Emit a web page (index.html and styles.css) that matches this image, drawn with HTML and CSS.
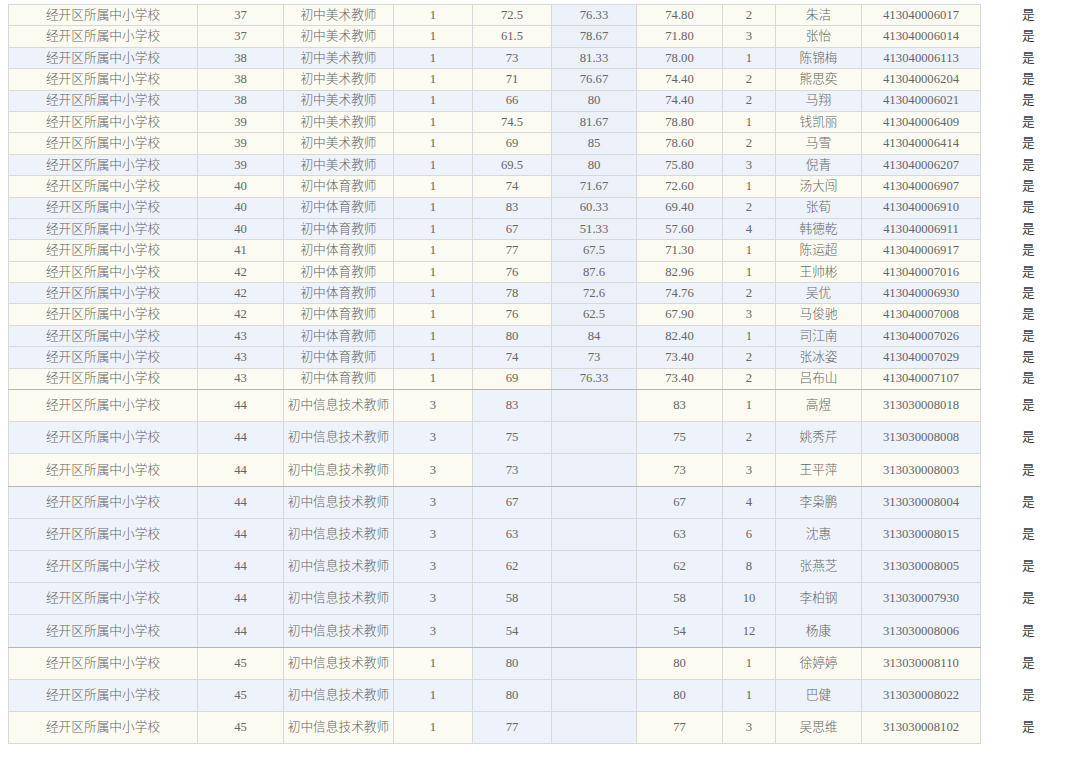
FILE: index.html
```html
<!DOCTYPE html>
<html lang="zh">
<head>
<meta charset="utf-8">
<title>成绩表</title>
<link rel="stylesheet" href="styles.css">
</head>
<body>
<div class="page">
<table class="grid">
<colgroup>
<col class="c1"><col class="c2"><col class="c3"><col class="c4"><col class="c5"><col class="c6"><col class="c7"><col class="c8"><col class="c9"><col class="c10"><col class="c11">
</colgroup>
<tbody>
<tr class="s y"><td>经开区所属中小学校</td><td>37</td><td>初中美术教师</td><td>1</td><td>72.5</td><td>76.33</td><td>74.80</td><td>2</td><td>朱洁</td><td>413040006017</td><td class="ok">是</td></tr>
<tr class="s y"><td>经开区所属中小学校</td><td>37</td><td>初中美术教师</td><td>1</td><td>61.5</td><td>78.67</td><td>71.80</td><td>3</td><td>张怡</td><td>413040006014</td><td class="ok">是</td></tr>
<tr class="s b"><td>经开区所属中小学校</td><td>38</td><td>初中美术教师</td><td>1</td><td>73</td><td>81.33</td><td>78.00</td><td>1</td><td>陈锦梅</td><td>413040006113</td><td class="ok">是</td></tr>
<tr class="s y"><td>经开区所属中小学校</td><td>38</td><td>初中美术教师</td><td>1</td><td>71</td><td>76.67</td><td>74.40</td><td>2</td><td>熊思奕</td><td>413040006204</td><td class="ok">是</td></tr>
<tr class="s b"><td>经开区所属中小学校</td><td>38</td><td>初中美术教师</td><td>1</td><td>66</td><td>80</td><td>74.40</td><td>2</td><td>马翔</td><td>413040006021</td><td class="ok">是</td></tr>
<tr class="s y"><td>经开区所属中小学校</td><td>39</td><td>初中美术教师</td><td>1</td><td>74.5</td><td>81.67</td><td>78.80</td><td>1</td><td>钱凯丽</td><td>413040006409</td><td class="ok">是</td></tr>
<tr class="s y"><td>经开区所属中小学校</td><td>39</td><td>初中美术教师</td><td>1</td><td>69</td><td>85</td><td>78.60</td><td>2</td><td>马雪</td><td>413040006414</td><td class="ok">是</td></tr>
<tr class="s b"><td>经开区所属中小学校</td><td>39</td><td>初中美术教师</td><td>1</td><td>69.5</td><td>80</td><td>75.80</td><td>3</td><td>倪青</td><td>413040006207</td><td class="ok">是</td></tr>
<tr class="s y"><td>经开区所属中小学校</td><td>40</td><td>初中体育教师</td><td>1</td><td>74</td><td>71.67</td><td>72.60</td><td>1</td><td>汤大闯</td><td>413040006907</td><td class="ok">是</td></tr>
<tr class="s b"><td>经开区所属中小学校</td><td>40</td><td>初中体育教师</td><td>1</td><td>83</td><td>60.33</td><td>69.40</td><td>2</td><td>张荀</td><td>413040006910</td><td class="ok">是</td></tr>
<tr class="s b"><td>经开区所属中小学校</td><td>40</td><td>初中体育教师</td><td>1</td><td>67</td><td>51.33</td><td>57.60</td><td>4</td><td>韩德乾</td><td>413040006911</td><td class="ok">是</td></tr>
<tr class="s y"><td>经开区所属中小学校</td><td>41</td><td>初中体育教师</td><td>1</td><td>77</td><td>67.5</td><td>71.30</td><td>1</td><td>陈运超</td><td>413040006917</td><td class="ok">是</td></tr>
<tr class="s y"><td>经开区所属中小学校</td><td>42</td><td>初中体育教师</td><td>1</td><td>76</td><td>87.6</td><td>82.96</td><td>1</td><td>王帅彬</td><td>413040007016</td><td class="ok">是</td></tr>
<tr class="s b"><td>经开区所属中小学校</td><td>42</td><td>初中体育教师</td><td>1</td><td>78</td><td>72.6</td><td>74.76</td><td>2</td><td>吴优</td><td>413040006930</td><td class="ok">是</td></tr>
<tr class="s y"><td>经开区所属中小学校</td><td>42</td><td>初中体育教师</td><td>1</td><td>76</td><td>62.5</td><td>67.90</td><td>3</td><td>马俊驰</td><td>413040007008</td><td class="ok">是</td></tr>
<tr class="s b"><td>经开区所属中小学校</td><td>43</td><td>初中体育教师</td><td>1</td><td>80</td><td>84</td><td>82.40</td><td>1</td><td>司江南</td><td>413040007026</td><td class="ok">是</td></tr>
<tr class="s b"><td>经开区所属中小学校</td><td>43</td><td>初中体育教师</td><td>1</td><td>74</td><td>73</td><td>73.40</td><td>2</td><td>张冰姿</td><td>413040007029</td><td class="ok">是</td></tr>
<tr class="s y sep"><td>经开区所属中小学校</td><td>43</td><td>初中体育教师</td><td>1</td><td>69</td><td>76.33</td><td>73.40</td><td>2</td><td>吕布山</td><td>413040007107</td><td class="ok">是</td></tr>
<tr class="t y"><td>经开区所属中小学校</td><td>44</td><td>初中信息技术教师</td><td>3</td><td>83</td><td></td><td>83</td><td>1</td><td>高煜</td><td>313030008018</td><td class="ok">是</td></tr>
<tr class="t b"><td>经开区所属中小学校</td><td>44</td><td>初中信息技术教师</td><td>3</td><td>75</td><td></td><td>75</td><td>2</td><td>姚秀芹</td><td>313030008008</td><td class="ok">是</td></tr>
<tr class="t y sep"><td>经开区所属中小学校</td><td>44</td><td>初中信息技术教师</td><td>3</td><td>73</td><td></td><td>73</td><td>3</td><td>王平萍</td><td>313030008003</td><td class="ok">是</td></tr>
<tr class="t b"><td>经开区所属中小学校</td><td>44</td><td>初中信息技术教师</td><td>3</td><td>67</td><td></td><td>67</td><td>4</td><td>李枭鹏</td><td>313030008004</td><td class="ok">是</td></tr>
<tr class="t b"><td>经开区所属中小学校</td><td>44</td><td>初中信息技术教师</td><td>3</td><td>63</td><td></td><td>63</td><td>6</td><td>沈惠</td><td>313030008015</td><td class="ok">是</td></tr>
<tr class="t b"><td>经开区所属中小学校</td><td>44</td><td>初中信息技术教师</td><td>3</td><td>62</td><td></td><td>62</td><td>8</td><td>张燕芝</td><td>313030008005</td><td class="ok">是</td></tr>
<tr class="t b"><td>经开区所属中小学校</td><td>44</td><td>初中信息技术教师</td><td>3</td><td>58</td><td></td><td>58</td><td>10</td><td>李柏钢</td><td>313030007930</td><td class="ok">是</td></tr>
<tr class="t b sep"><td>经开区所属中小学校</td><td>44</td><td>初中信息技术教师</td><td>3</td><td>54</td><td></td><td>54</td><td>12</td><td>杨康</td><td>313030008006</td><td class="ok">是</td></tr>
<tr class="t y"><td>经开区所属中小学校</td><td>45</td><td>初中信息技术教师</td><td>1</td><td>80</td><td></td><td>80</td><td>1</td><td>徐婷婷</td><td>313030008110</td><td class="ok">是</td></tr>
<tr class="t b"><td>经开区所属中小学校</td><td>45</td><td>初中信息技术教师</td><td>1</td><td>80</td><td></td><td>80</td><td>1</td><td>巴健</td><td>313030008022</td><td class="ok">是</td></tr>
<tr class="t y"><td>经开区所属中小学校</td><td>45</td><td>初中信息技术教师</td><td>1</td><td>77</td><td></td><td>77</td><td>3</td><td>吴思维</td><td>313030008102</td><td class="ok">是</td></tr>
</tbody>
</table>
</div>
</body>
</html>
```

FILE: styles.css
```css
html, body {
  margin: 0;
  padding: 0;
  background: #ffffff;
}

.page {
  padding: 4px 0 0 8px;
}

.grid {
  border-collapse: collapse;
  table-layout: fixed;
  width: 1072px;
  font-family: "Liberation Serif", "Noto Sans CJK SC", serif;
  font-size: 12.7px;
  font-weight: 300;
  color: #666666;
}

.c1 { width: 189px; }
.c2 { width: 86px; }
.c3 { width: 110px; }
.c4 { width: 79px; }
.c5 { width: 79px; }
.c6 { width: 85px; }
.c7 { width: 86px; }
.c8 { width: 53px; }
.c9 { width: 86px; }
.c10 { width: 119px; }
.c11 { width: 100px; }

.grid td {
  padding: 0;
  text-align: center;
  vertical-align: middle;
  line-height: 1;
  white-space: nowrap;
  border: 1px solid #d8d8d8;
}

.grid tr.s { height: 21.4px; }
.grid tr.t { height: 32.2px; }

.grid tr.y td { background: #fbfbf1; }
.grid tr.b td { background: #eef2fa; }

.grid tr td:nth-child(6) { background: #ecf0f9; }
.grid tr.t td:nth-child(5) { background: #eef2fa; }

.grid td:nth-child(2),
.grid td:nth-child(3),
.grid td:nth-child(6),
.grid td:nth-child(7) {
  border-left-color: #a8a8a8;
}

.grid td:nth-child(5) { border-left-color: #e2e2e2; }

.grid tr.sep td { border-bottom-color: #b5b5b5; }

.grid tr td.ok {
  background: #ffffff;
  border: none;
  border-left: 1px solid #d8d8d8;
  color: #3a3a3a;
  font-weight: 400;
  padding-left: 0;
  text-indent: -5px;
}
```
